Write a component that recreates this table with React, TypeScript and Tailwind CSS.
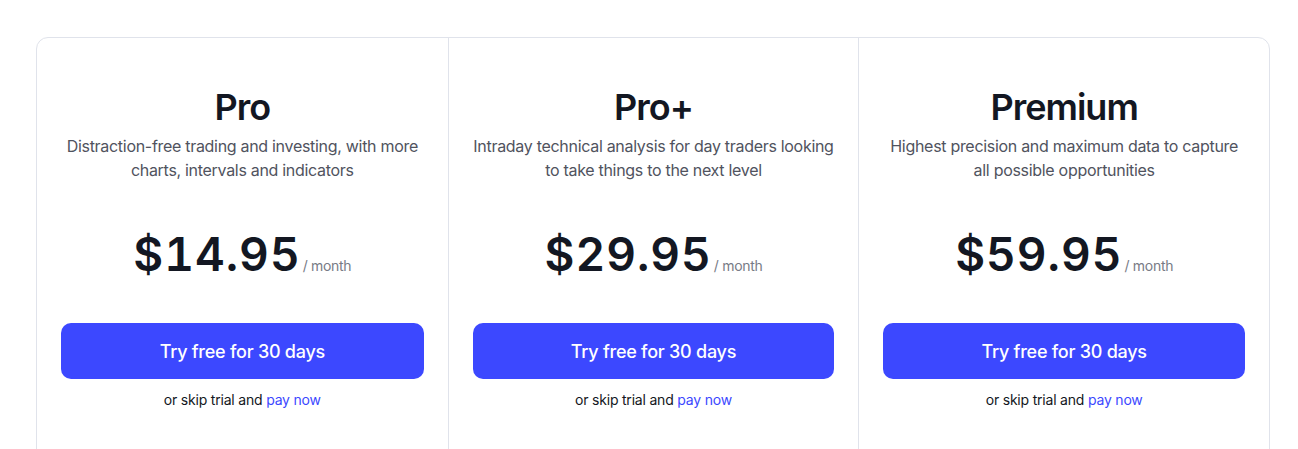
import React from "react";

const plans = [
  {
    name: "Pro",
    desc: ["Distraction-free trading and investing, with more", "charts, intervals and indicators"],
    price: "$14.95",
  },
  {
    name: "Pro+",
    desc: ["Intraday technical analysis for day traders looking", "to take things to the next level"],
    price: "$29.95",
  },
  {
    name: "Premium",
    desc: ["Highest precision and maximum data to capture", "all possible opportunities"],
    price: "$59.95",
  },
];

export default function App() {
  return (
    <div
      className="w-[1298px] h-[449px] bg-white overflow-hidden"
      style={{ fontFamily: "Inter, 'Noto Sans', sans-serif" }}
    >
      <div className="ml-[36px] mt-[37px] w-[1234px] h-[460px] border border-[#e0e3eb] rounded-[12px] grid grid-cols-3">
        {plans.map((p, i) => (
          <div
            key={p.name}
            className={`flex flex-col items-center px-6 pt-[49px] ${i > 0 ? "border-l border-[#e0e3eb]" : ""}`}
          >
            <h2 className="text-[36px] leading-[40px] font-semibold text-[#131722] tracking-[-1px] whitespace-nowrap">
              {p.name}
            </h2>
            <p className="mt-[7px] text-[16px] leading-[24px] text-[#50535e] text-center tracking-[-0.3px] whitespace-nowrap">
              {p.desc[0]}
              <br />
              {p.desc[1]}
            </p>
            <div className="mt-[46px] h-[52px] flex items-baseline whitespace-nowrap">
              <span className="text-[46px] leading-[52px] font-semibold text-[#131722] tracking-[1px] tabular-nums">{p.price}</span>
              <span className="ml-[2px] text-[14px] text-[#787b86] tracking-[-0.3px]">/ month</span>
            </div>
            <button className="mt-[43px] w-full h-[56px] rounded-[10px] bg-[#3c48ff] text-white text-[18px] font-medium tracking-[-0.25px]">
              Try free for 30 days
            </button>
            <p className="mt-[11px] text-[14px] leading-[20px] text-[#131722] tracking-[-0.2px] whitespace-nowrap">
              or skip trial and <span className="text-[#3c48ff]">pay now</span>
            </p>
          </div>
        ))}
      </div>
    </div>
  );
}
